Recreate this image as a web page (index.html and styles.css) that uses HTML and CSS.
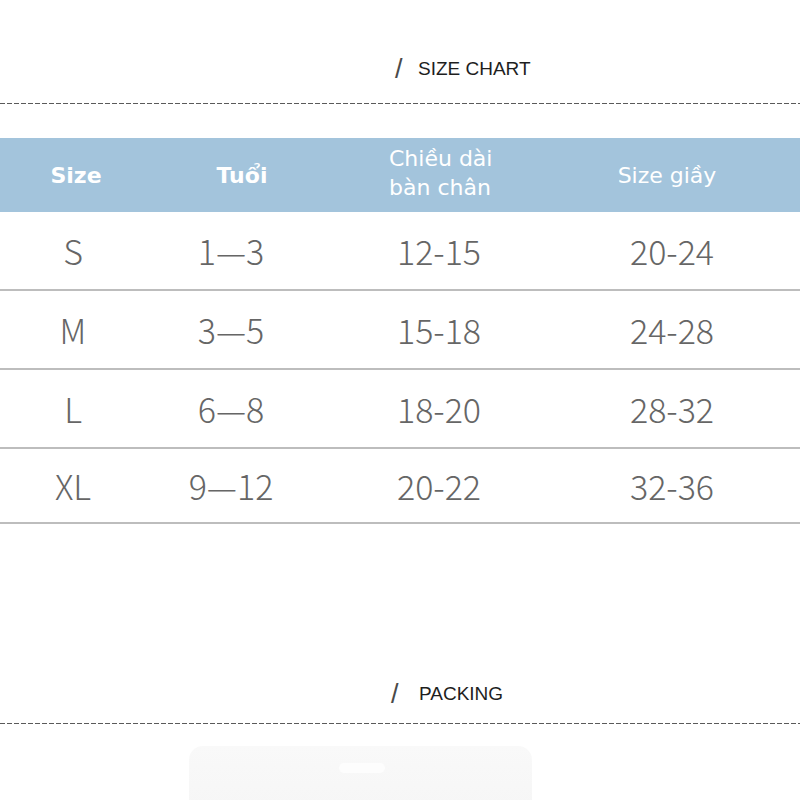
FILE: index.html
```html
<!DOCTYPE html>
<html lang="vi">
<head>
<meta charset="utf-8">
<title>Size chart</title>
<link rel="stylesheet" href="styles.css">
</head>
<body>
<div class="page">
  <div class="title title-size"><span class="slash">/</span><span class="label">SIZE CHART</span></div>
  <div class="dash"></div>

  <div class="chart">
    <div class="row head">
      <div class="cell c1 bold">Size</div>
      <div class="cell c2 bold">Tuổi</div>
      <div class="cell c3 two">Chiều dài<br>bàn chân</div>
      <div class="cell c4">Size giầy</div>
    </div>
    <div class="row">
      <div class="cell c1">S</div>
      <div class="cell c2">1—3</div>
      <div class="cell c3">12-15</div>
      <div class="cell c4">20-24</div>
    </div>
    <div class="row">
      <div class="cell c1">M</div>
      <div class="cell c2">3—5</div>
      <div class="cell c3">15-18</div>
      <div class="cell c4">24-28</div>
    </div>
    <div class="row">
      <div class="cell c1">L</div>
      <div class="cell c2">6—8</div>
      <div class="cell c3">18-20</div>
      <div class="cell c4">28-32</div>
    </div>
    <div class="row last">
      <div class="cell c1">XL</div>
      <div class="cell c2">9—12</div>
      <div class="cell c3">20-22</div>
      <div class="cell c4">32-36</div>
    </div>
  </div>

  <div class="title title-pack"><span class="slash">/</span><span class="label">PACKING</span></div>
  <div class="dash"></div>

  <div class="bag-wrap">
    <div class="bag"><div class="hole"></div></div>
  </div>
</div>
</body>
</html>
```

FILE: styles.css
```css
html, body {
  margin: 0;
  padding: 0;
  background: #ffffff;
}
.page {
  width: 800px;
  height: 800px;
  overflow: hidden;
}
.title {
  display: flex;
  align-items: center;
  height: 24px;
  font-family: "Liberation Sans", Arial, sans-serif;
  color: #1e1e1e;
  font-size: 19px;
}
.title-size {
  padding-top: 57px;
  padding-bottom: 22px;
  padding-left: 395px;
}
.title-pack {
  padding-top: 158px;
  padding-bottom: 17px;
  padding-left: 391px;
}
.slash {
  font-size: 27px;
  width: 23px;
  color: #4a4a4a;
}
.title-pack .slash { width: 28px; }
.dash {
  height: 1px;
  background: repeating-linear-gradient(to right, #5a5a5a 0 5px, transparent 5px 7px);
}
.chart {
  margin-top: 34px;
}
.row {
  display: grid;
  grid-template-columns: 146px 170px 246px 220px 1fr;
  align-items: center;
  height: 77px;
  border-bottom: 2px solid #bdbdbd;
  font-family: "Noto Sans CJK SC", "Noto Sans", sans-serif;
  font-weight: 300;
  font-size: 34px;
  color: #666666;
}
.row.last { height: 73px; }
.row.head {
  height: 74px;
  border-bottom: none;
  background: #a3c4dc;
  color: #ffffff;
  font-family: "DejaVu Sans", Verdana, sans-serif;
  font-weight: 400;
  font-size: 22px;
}
.cell {
  text-align: center;
  white-space: nowrap;
}
.head .bold { font-weight: 700; font-size: 22px; }
.head .c1 { padding-left: 6px; }
.head .c2 { padding-left: 22px; }
.head .c3 { line-height: 29px; text-align: left; padding-left: 73px; padding-bottom: 4px; }
.head .c4 { padding-right: 10px; }
.bag-wrap {
  padding-top: 22px;
  padding-left: 189px;
}
.bag {
  position: relative;
  width: 343px;
  height: 80px;
  background: linear-gradient(to bottom, #f9f9f9, #f5f5f5);
  border-radius: 14px 14px 0 0;
}
.hole {
  position: absolute;
  left: 150px;
  top: 17px;
  width: 46px;
  height: 10px;
  border-radius: 6px;
  background: #fdfdfd;
}
```
